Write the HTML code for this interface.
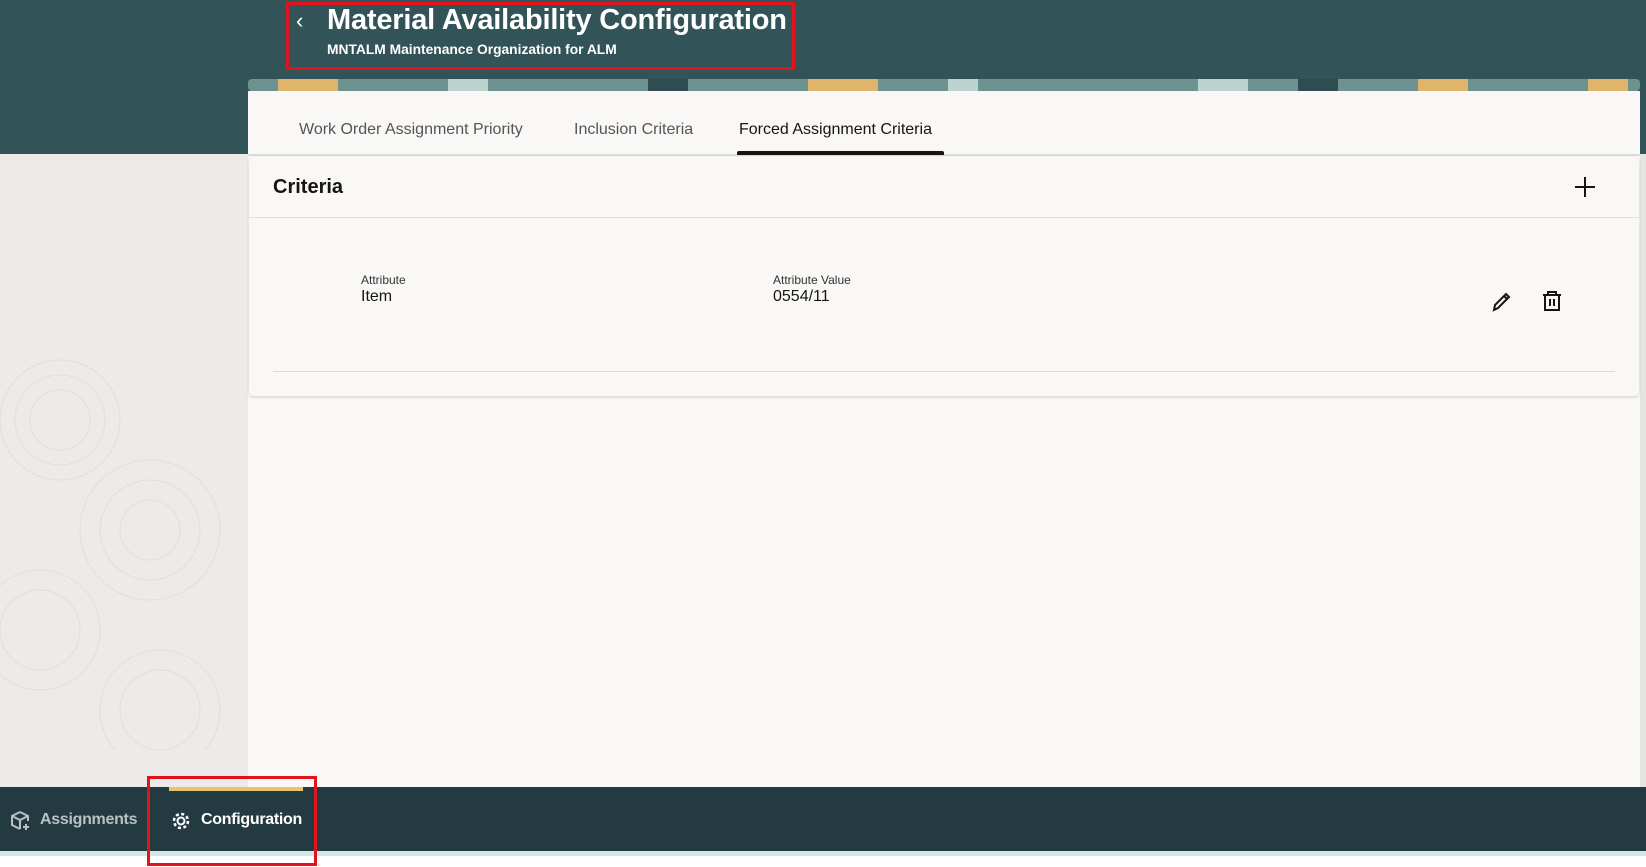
<!DOCTYPE html>
<html><head><meta charset="utf-8"><style>
*{margin:0;padding:0;box-sizing:border-box}
body{width:1646px;height:867px;overflow:hidden;background:#fff;font-family:"Liberation Sans",sans-serif;position:relative}
.abs{position:absolute}
</style></head><body>
<div class="abs" style="left:0;top:0;width:1646px;height:154px;background:#325358"></div>
<div class="abs" style="left:0;top:154px;width:248px;height:633px;background:#ecebe9"></div>
<svg class="abs" style="left:0;top:330px" width="248" height="420"><g fill="none" stroke="#e0dfdc" stroke-width="1">
<circle cx="60" cy="90" r="60"/><circle cx="60" cy="90" r="45"/><circle cx="60" cy="90" r="30"/>
<circle cx="150" cy="200" r="70"/><circle cx="150" cy="200" r="50"/><circle cx="150" cy="200" r="30"/>
<circle cx="40" cy="300" r="60"/><circle cx="40" cy="300" r="40"/><circle cx="160" cy="380" r="60"/><circle cx="160" cy="380" r="40"/></g></svg>
<div class="abs" style="left:1640px;top:154px;width:6px;height:633px;background:#e4e4e2"></div>
<div class="abs" style="left:286px;top:2px;width:509px;height:68px;border:3px solid #e0141c"></div>
<div class="abs" style="left:296px;top:8px;color:#fff;font-size:22px">&#8249;</div>
<div class="abs" style="left:327px;top:4px;color:#fff;font-size:29px;font-weight:bold;white-space:nowrap;letter-spacing:-0.2px">Material Availability Configuration</div>
<div class="abs" style="left:327px;top:42px;color:#fff;font-size:13.8px;font-weight:bold;white-space:nowrap">MNTALM Maintenance Organization for ALM</div>
<svg class="abs" style="left:248px;top:79px" width="1392" height="12"><rect width="1392" height="12" rx="4" fill="#6d9290"/>
<g fill="#e0b46a"><rect x="30" y="0" width="60" height="12"/><rect x="560" y="0" width="70" height="12"/><rect x="1170" y="0" width="50" height="12"/><rect x="1340" y="0" width="40" height="12"/></g>
<g fill="#bcd3d0"><rect x="200" y="0" width="40" height="12"/><rect x="700" y="0" width="30" height="12"/><rect x="950" y="0" width="50" height="12"/></g>
<g fill="#2f4d50"><rect x="400" y="0" width="40" height="12"/><rect x="1050" y="0" width="40" height="12"/></g></svg>
<div class="abs" style="left:248px;top:91px;width:1392px;height:696px;background:#f9f8f6"></div>
<div class="abs" style="left:248px;top:154px;width:1392px;height:2px;background:#dcdcda"></div>
<div class="abs" style="left:299px;top:121px;font-size:16px;color:#555;white-space:nowrap">Work Order Assignment Priority</div>
<div class="abs" style="left:574px;top:121px;font-size:16px;color:#555;white-space:nowrap">Inclusion Criteria</div>
<div class="abs" style="left:739px;top:121px;font-size:16px;color:#161513;white-space:nowrap">Forced Assignment Criteria</div>
<div class="abs" style="left:737px;top:151px;width:207px;height:4px;background:#161513;border-radius:2px 2px 0 0"></div>
<div class="abs" style="left:249px;top:157px;width:1390px;height:239px;background:#f9f8f6;border-radius:4px;box-shadow:0 1px 3px rgba(0,0,0,.18)"></div>
<div class="abs" style="left:249px;top:217px;width:1390px;height:1px;background:#e0dfdd"></div>
<div class="abs" style="left:273px;top:176px;font-size:20px;font-weight:bold;color:#161513">Criteria</div>
<svg class="abs" style="left:1574px;top:176px" width="22" height="22"><path d="M11 1V21M1 11H21" stroke="#161513" stroke-width="2"/></svg>
<div class="abs" style="left:361px;top:273px;font-size:12px;color:#333">Attribute</div>
<div class="abs" style="left:361px;top:288px;font-size:16px;color:#161513">Item</div>
<div class="abs" style="left:773px;top:273px;font-size:12px;color:#333">Attribute Value</div>
<div class="abs" style="left:773px;top:288px;font-size:16px;color:#161513">0554/11</div>
<svg class="abs" style="left:1491px;top:290px" width="22" height="22"><path d="M3 20L4 15L15 4L18 7L7 18Z M13 6L16 9" fill="none" stroke="#161513" stroke-width="2"/></svg>
<svg class="abs" style="left:1541px;top:290px" width="22" height="22"><path d="M2 5H20M7 5V2H15V5M4 5V20H18V5M9 9V16M13 9V16" fill="none" stroke="#161513" stroke-width="2"/></svg>
<div class="abs" style="left:273px;top:371px;width:1342px;height:1px;background:#dcdcda"></div>
<div class="abs" style="left:0;top:787px;width:1646px;height:64px;background:#233a40"></div>
<div class="abs" style="left:0;top:851px;width:1646px;height:5px;background:#d3e6ea"></div>
<div class="abs" style="left:169px;top:787px;width:134px;height:4px;background:#e6c36c"></div>
<svg class="abs" style="left:10px;top:810px" width="22" height="22"><path d="M10 2L18 6V11M10 2L2 6V15L10 19M2 6L10 10L18 6M10 10V19M16 14V20M13 17H19" fill="none" stroke="#b8c1c3" stroke-width="2"/></svg>
<div class="abs" style="left:40px;top:811px;font-size:16px;font-weight:bold;color:#b8c1c3;letter-spacing:-0.3px">Assignments</div>
<svg class="abs" style="left:170px;top:810px" width="22" height="22"><circle cx="11" cy="11" r="3.5" fill="none" stroke="#fff" stroke-width="2"/><circle cx="11" cy="11" r="7" fill="none" stroke="#fff" stroke-width="2.5" stroke-dasharray="3 2.5"/></svg>
<div class="abs" style="left:201px;top:811px;font-size:16px;font-weight:bold;color:#fff;letter-spacing:-0.3px">Configuration</div>
<div class="abs" style="left:147px;top:776px;width:170px;height:90px;border:3px solid #e0141c"></div>
</body></html>
